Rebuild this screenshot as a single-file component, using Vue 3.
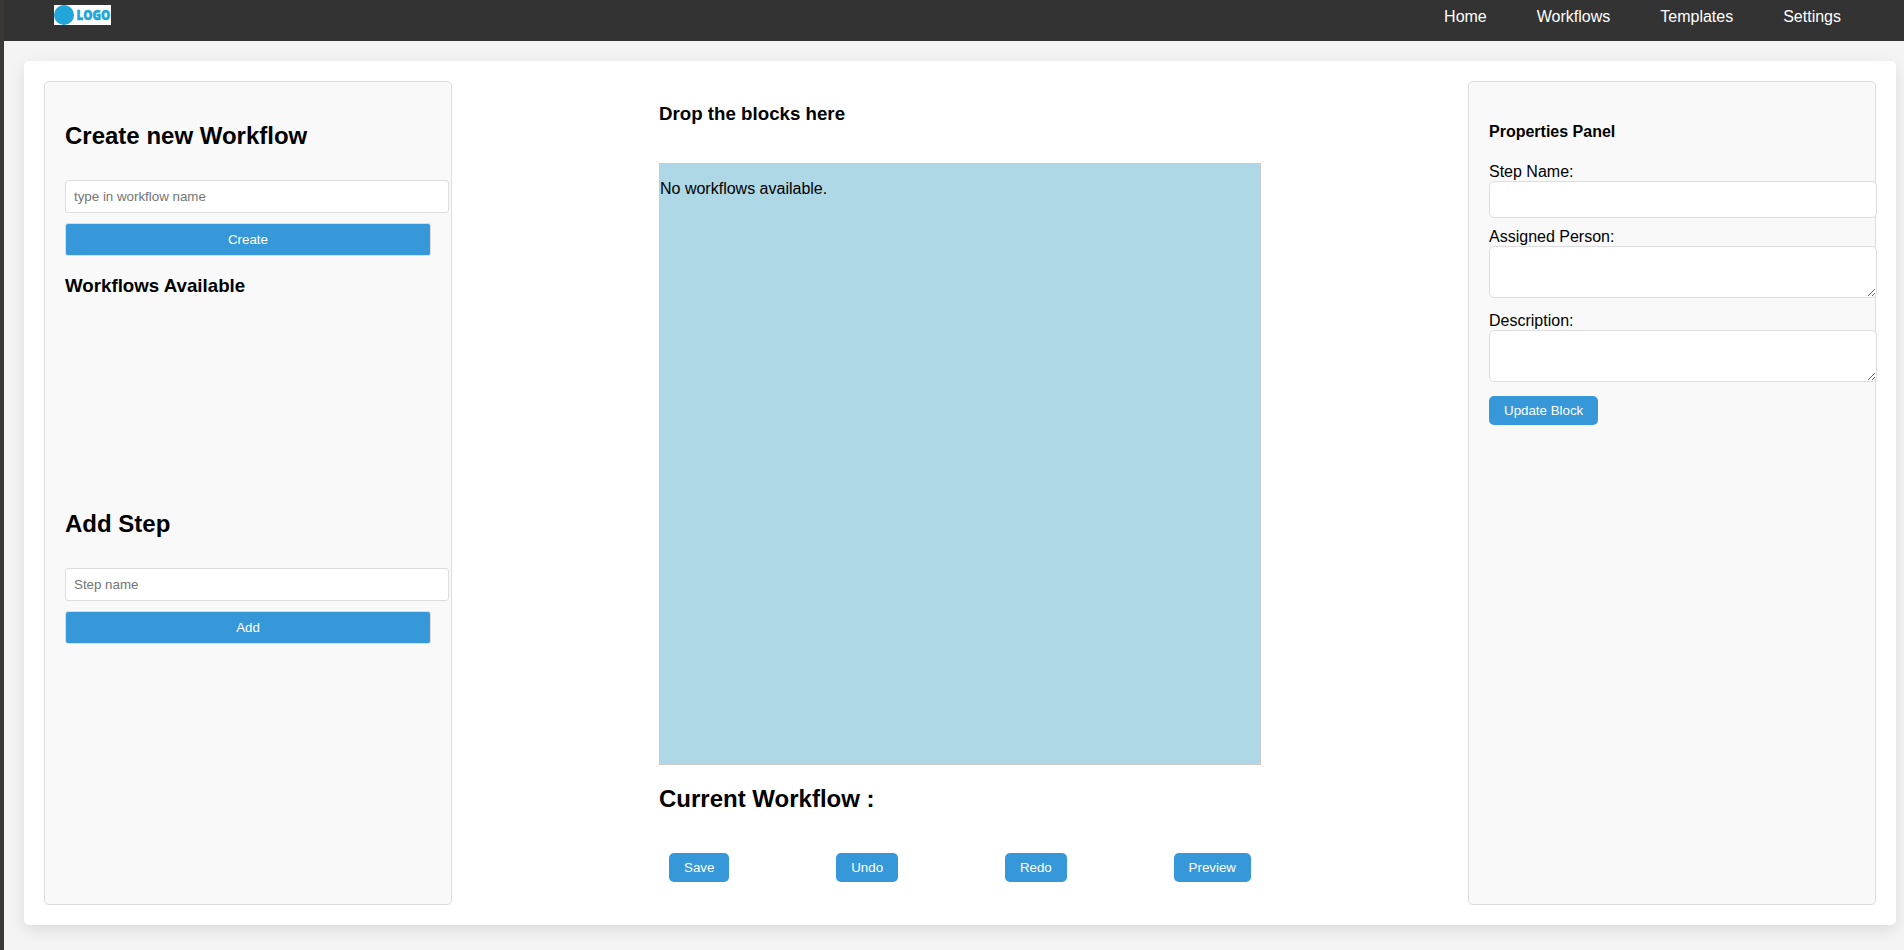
<script setup>
import { ref } from 'vue'

const links = ['Home', 'Workflows', 'Templates', 'Settings']
const actions = ['Save', 'Undo', 'Redo', 'Preview']
const workflowName = ref('')
const newStep = ref('')
const stepName = ref('')
const assigned = ref('')
const description = ref('')
</script>

<template>
  <div class="page">
    <header class="topbar">
      <svg class="logo" width="57" height="20" viewBox="0 0 57 20">
        <rect width="57" height="20" fill="#fff" />
        <circle cx="10" cy="10" r="10" fill="#22a5d8" />
        <text x="22.4" y="15" textLength="34" lengthAdjust="spacingAndGlyphs">LOGO</text>
      </svg>
      <nav class="nav">
        <a v-for="link in links" :key="link">{{ link }}</a>
      </nav>
    </header>

    <main class="container">
      <aside class="panel">
        <section class="create">
          <h2>Create new Workflow</h2>
          <input v-model="workflowName" class="side-input" type="text" placeholder="type in workflow name">
          <button class="side-button">Create</button>
          <h3>Workflows Available</h3>
        </section>
        <section>
          <h2>Add Step</h2>
          <input v-model="newStep" class="side-input" type="text" placeholder="Step name">
          <button class="side-button">Add</button>
        </section>
      </aside>

      <section class="board">
        <h3>Drop the blocks here</h3>
        <div class="canvas"><p>No workflows available.</p></div>
        <h2>Current Workflow :</h2>
        <div class="actions">
          <button v-for="action in actions" :key="action" class="btn">{{ action }}</button>
        </div>
      </section>

      <aside class="panel props">
        <h4>Properties Panel</h4>
        <label>Step Name:</label>
        <input v-model="stepName" class="field" type="text">
        <label>Assigned Person:</label>
        <textarea v-model="assigned" class="field"></textarea>
        <label>Description:</label>
        <textarea v-model="description" class="field"></textarea>
        <button class="btn">Update Block</button>
      </aside>
    </main>
  </div>
</template>

<style>
body {
  margin: 0;
  background: #f4f4f4;
  overflow: hidden;
}
</style>

<style scoped>
.page {
  box-sizing: border-box;
  height: 950px;
  border-left: 4px solid #3c3836;
  background: #f4f4f4;
  color: #000;
  font: 16px/18px "Liberation Sans", Arial, sans-serif;
}
.topbar {
  box-sizing: border-box;
  display: flex;
  justify-content: space-between;
  align-items: flex-start;
  height: 41px;
  padding: 5px 63px 0 50px;
  background: #333;
}
.logo {
  display: block;
  overflow: visible;
}
.logo text {
  font: 800 14px/1 "Open Sans", "Noto Sans", sans-serif;
  fill: #22a5d8;
  stroke: #22a5d8;
  stroke-width: 0.5px;
}
.nav {
  display: flex;
  gap: 50px;
  padding-top: 3px;
  color: #fff;
}
.container {
  box-sizing: border-box;
  display: flex;
  justify-content: space-between;
  height: 864px;
  margin: 20px 8px 0 20px;
  padding: 20px;
  border-radius: 5px;
  background: #fff;
  box-shadow: 0 5px 15px rgba(0, 0, 0, 0.1);
}
.panel {
  box-sizing: border-box;
  width: 408px;
  padding: 20px;
  border: 1px solid #ddd;
  border-radius: 5px;
  background: #f9f9f9;
}
h2, h3, h4 {
  margin: 0;
  font-weight: bold;
}
h2 {
  font-size: 24px;
  line-height: 27px;
}
h3 {
  font-size: 18.72px;
  line-height: 21px;
}
h4 {
  font-size: 16px;
  line-height: 18px;
}
input, textarea, button {
  display: block;
  margin: 0;
  font: 13.333px/15px "Liberation Sans", Arial, sans-serif;
}
.panel h2 {
  padding: 20px 0 31px;
}
.create {
  height: 388px;
}
.create h3 {
  margin-top: 19px;
}
.side-input {
  box-sizing: border-box;
  width: 384px;
  height: 33px;
  padding: 8px;
  border: 1px solid #ddd;
  border-radius: 3px;
  background: #fff;
}
.side-input::placeholder {
  color: #757575;
}
.side-button {
  width: 366px;
  height: 33px;
  margin-top: 10px;
  padding: 8px;
  border: 1px solid #ddd;
  border-radius: 3px;
  background: #3698d9;
  color: #fff;
}
.board {
  width: 602px;
}
.board h3 {
  padding: 22px 0 39px;
}
.canvas {
  box-sizing: border-box;
  height: 602px;
  border: 1px solid #ccc;
  background: #aed8e5;
}
.canvas p {
  margin: 16px 0;
}
.board h2 {
  padding: 20px 0 41px;
}
.actions {
  display: flex;
  justify-content: space-between;
  padding: 0 10px;
}
.btn {
  height: 29px;
  padding: 7px 15px;
  border: 0;
  border-radius: 5px;
  background: #3698d9;
  color: #fff;
}
.props h4 {
  padding: 21px 0 22px;
}
.props label {
  display: block;
  line-height: 18px;
}
.field {
  box-sizing: border-box;
  width: 388px;
  padding: 10px;
  border: 1px solid #ddd;
  border-radius: 5px;
  background: #fff;
}
input.field {
  height: 37px;
  margin-bottom: 10px;
}
textarea.field {
  height: 52px;
  margin-bottom: 14px;
}
</style>
